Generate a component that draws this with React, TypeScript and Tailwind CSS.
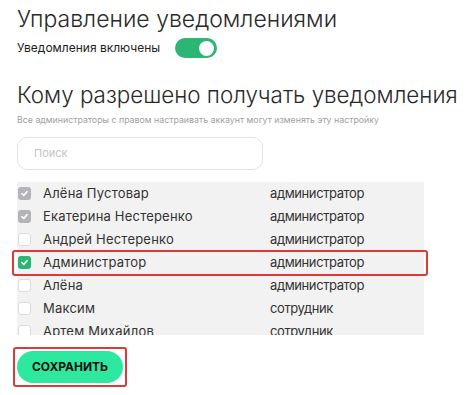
import React from 'react';

const USERS = [
  { name: 'Алёна Пустовар', role: 'администратор', state: 'locked' },
  { name: 'Екатерина Нестеренко', role: 'администратор', state: 'locked' },
  { name: 'Андрей Нестеренко', role: 'администратор', state: 'off' },
  { name: 'Администратор', role: 'администратор', state: 'on', marked: true },
  { name: 'Алёна', role: 'администратор', state: 'off' },
  { name: 'Максим', role: 'сотрудник', state: 'off' },
  { name: 'Артем Михайлов', role: 'сотрудник', state: 'off' },
];

function Check({ state }: { state: string }) {
  if (state === 'off') {
    return <span className="h-[13px] w-[13px] shrink-0 rounded-[3px] border border-[#dcdcdc] bg-white" />;
  }
  const bg = state === 'on' ? 'bg-[#2bb673]' : 'bg-[#b4b4b8]';
  return (
    <span className={`flex h-[13px] w-[13px] shrink-0 items-center justify-center rounded-[3px] ${bg}`}>
      <svg viewBox="0 0 12 12" className="h-[9px] w-[9px]" fill="none" stroke="white" strokeWidth="2" strokeLinecap="round" strokeLinejoin="round">
        <path d="M2.5 6.2 5 8.5 9.5 3.5" />
      </svg>
    </span>
  );
}

export default function App() {
  return (
    <div className="h-[395px] w-[474px] overflow-hidden bg-white font-['Inter',sans-serif] text-[#222]">
      <div className="pl-[17px] pt-[4px]">
        <h1 className="whitespace-nowrap text-[23px] font-light leading-[30px] text-[#2a2a2a]">Управление уведомлениями</h1>

        <div className="mt-[4px] flex items-center">
          <span className="w-[158px] text-[12px] text-[#1e1e1e]">Уведомления включены</span>
          <span className="flex h-[20px] w-[42px] items-center justify-end rounded-full bg-[#2bb673] pr-[3px]">
            <span className="h-[15px] w-[15px] rounded-full bg-white" />
          </span>
        </div>

        <h2 className="mt-[22px] whitespace-nowrap text-[22.4px] font-light leading-[30px] text-[#2a2a2a]">Кому разрешено получать уведомления</h2>
        <p className="mt-[3px] whitespace-nowrap text-[8.8px] text-[#a0a0a0]">Все администраторы с правом настраивать аккаунт могут изменять эту настройку</p>

        <div className="mt-[11px] flex h-[33px] w-[246px] items-center rounded-[10px] border border-[#e4e4e4] pl-[16px] text-[11px] text-[#c4c4c4]">
          Поиск
        </div>

        <div className="mt-[12px] h-[153px] w-[407px] overflow-x-visible overflow-y-clip bg-[#f2f2f2]">
          {USERS.map((u) => (
            <div key={u.name} className="relative flex h-[23px] items-center pl-[1px] text-[13px] text-[#333]">
              {u.marked && (
                <span className="pointer-events-none absolute -left-[5px] -top-[1px] h-[26px] w-[416px] rounded-[3px] border-2 border-[#d93a3a]" />
              )}
              <Check state={u.state} />
              <span className="ml-[12px] w-[227px] tracking-[0.2px]">{u.name}</span>
              <span className="tracking-[-0.4px]">{u.role}</span>
            </div>
          ))}
        </div>

        <div className="-ml-[4px] mt-[12px] inline-flex rounded-[3px] border-2 border-[#d93a3a] p-[2px]">
          <button className="h-[32px] w-[106px] rounded-full bg-[#2ee8a0] text-[12px] font-bold text-[#111]">
            СОХРАНИТЬ
          </button>
        </div>
      </div>
    </div>
  );
}
